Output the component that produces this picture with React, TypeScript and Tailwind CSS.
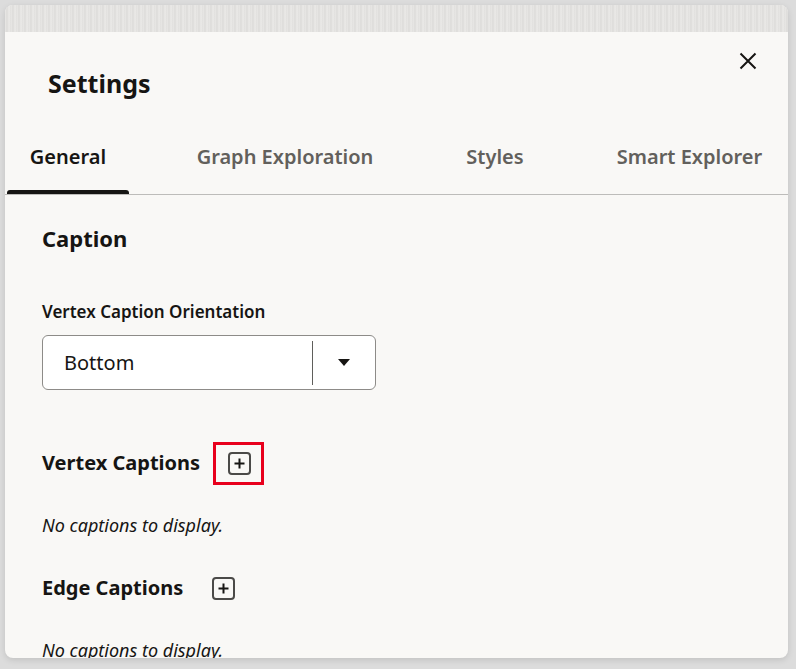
import React from "react"

const tabs = [
  { label: "General", w: "w-[122px]", active: true },
  { label: "Graph Exploration", w: "w-[222px]", active: false },
  { label: "Styles", w: "w-[106px]", active: false },
  { label: "Smart Explorer", w: "w-[191px]", active: false },
]

function PlusButton() {
  return (
    <button className="w-[23px] h-[23px] rounded-[4px] border-2 border-[#4b4a48] flex items-center justify-center bg-transparent">
      <svg width="13" height="13" viewBox="0 0 13 13">
        <path d="M6.5 1.5v10M1.5 6.5h10" stroke="#161513" strokeWidth="2" />
      </svg>
    </button>
  )
}

export default function App() {
  return (
    <div
      className="w-[796px] h-[669px] overflow-hidden bg-[#dcdcdc] pl-[5px] pr-[8px] pt-[5px]"
      style={{ fontFamily: '"Noto Sans", "Open Sans", sans-serif' }}
    >
      <div className="relative h-[653px] rounded-[8px] bg-[#f9f8f6] overflow-hidden shadow-[0_2px_6px_rgba(0,0,0,0.12)] flex flex-col">
        {/* blurred backdrop strip */}
        <div className="h-[27px] shrink-0 bg-[#e4e3e1] bg-[repeating-linear-gradient(90deg,#e9e8e6_0px,#dcdbd9_2px,#ebeae8_4px,#e0dfdd_6px)]" />

        {/* Header */}
        <div className="relative h-[88px] shrink-0">
          <h1 className="absolute left-[43px] top-[33px] text-[25px] leading-[36px] font-bold text-[#161513]">
            Settings
          </h1>
          <button className="absolute right-[29px] top-[18px] w-[22px] h-[22px] flex items-center justify-center">
            <svg width="18" height="18" viewBox="0 0 18 18">
              <path d="M1.5 1.5l15 15M16.5 1.5l-15 15" stroke="#161513" strokeWidth="2" />
            </svg>
          </button>
        </div>

        {/* Tabs */}
        <div className="h-[75px] shrink-0 flex items-end border-b border-[#bdbcba] pl-[2px]">
          {tabs.map((t, i) => (
            <div
              key={t.label}
              className={`${t.w} ${i === 1 ? "ml-[45px]" : i > 1 ? "ml-[46px]" : ""} flex flex-col items-center`}
            >
              <span
                className={`text-[20px] leading-[28px] font-semibold whitespace-nowrap ${
                  t.active ? "text-[#161513]" : "text-[#62605c]"
                }`}
              >
                {t.label}
              </span>
              <div
                className={`mt-[19px] h-[4px] w-full rounded-t-[3px] ${t.active ? "bg-[#161513]" : "bg-transparent"}`}
              />
            </div>
          ))}
        </div>

        {/* Content */}
        <div className="pl-[37px] text-[#161513]">
          <h2 className="mt-[28px] text-[22px] leading-[30px] font-bold">Caption</h2>

          <div className="mt-[48px] text-[17px] leading-[22px] font-semibold">Vertex Caption Orientation</div>

          <div className="mt-[12px] w-[334px] h-[55px] rounded-[6px] border border-[#8d8b88] bg-white flex items-center">
            <span className="flex-1 pl-[21px] text-[20px] text-[#161513]">Bottom</span>
            <div className="w-px h-[44px] bg-[#5f5e5b]" />
            <div className="w-[62px] flex items-center justify-center">
              <svg width="12" height="7" viewBox="0 0 12 7">
                <path d="M0 0h12L6 7z" fill="#161513" />
              </svg>
            </div>
          </div>

          <div className="mt-[59px] flex items-center h-[28px]">
            <h3 className="text-[20px] leading-[28px] font-bold">Vertex Captions</h3>
            <div className="relative ml-[28px]">
              <PlusButton />
              <div className="absolute -left-[15px] -top-[10px] w-[51px] h-[43px] border-[3px] border-[#e8001c]" />
            </div>
          </div>

          <p className="mt-[37px] text-[18px] leading-[22px] italic">No captions to display.</p>

          <div className="mt-[38px] flex items-center h-[28px]">
            <h3 className="text-[20px] leading-[28px] font-bold">Edge Captions</h3>
            <div className="ml-[29px]">
              <PlusButton />
            </div>
          </div>

          <p className="mt-[37px] text-[18px] leading-[22px] italic">No captions to display.</p>
        </div>
      </div>
    </div>
  )
}
